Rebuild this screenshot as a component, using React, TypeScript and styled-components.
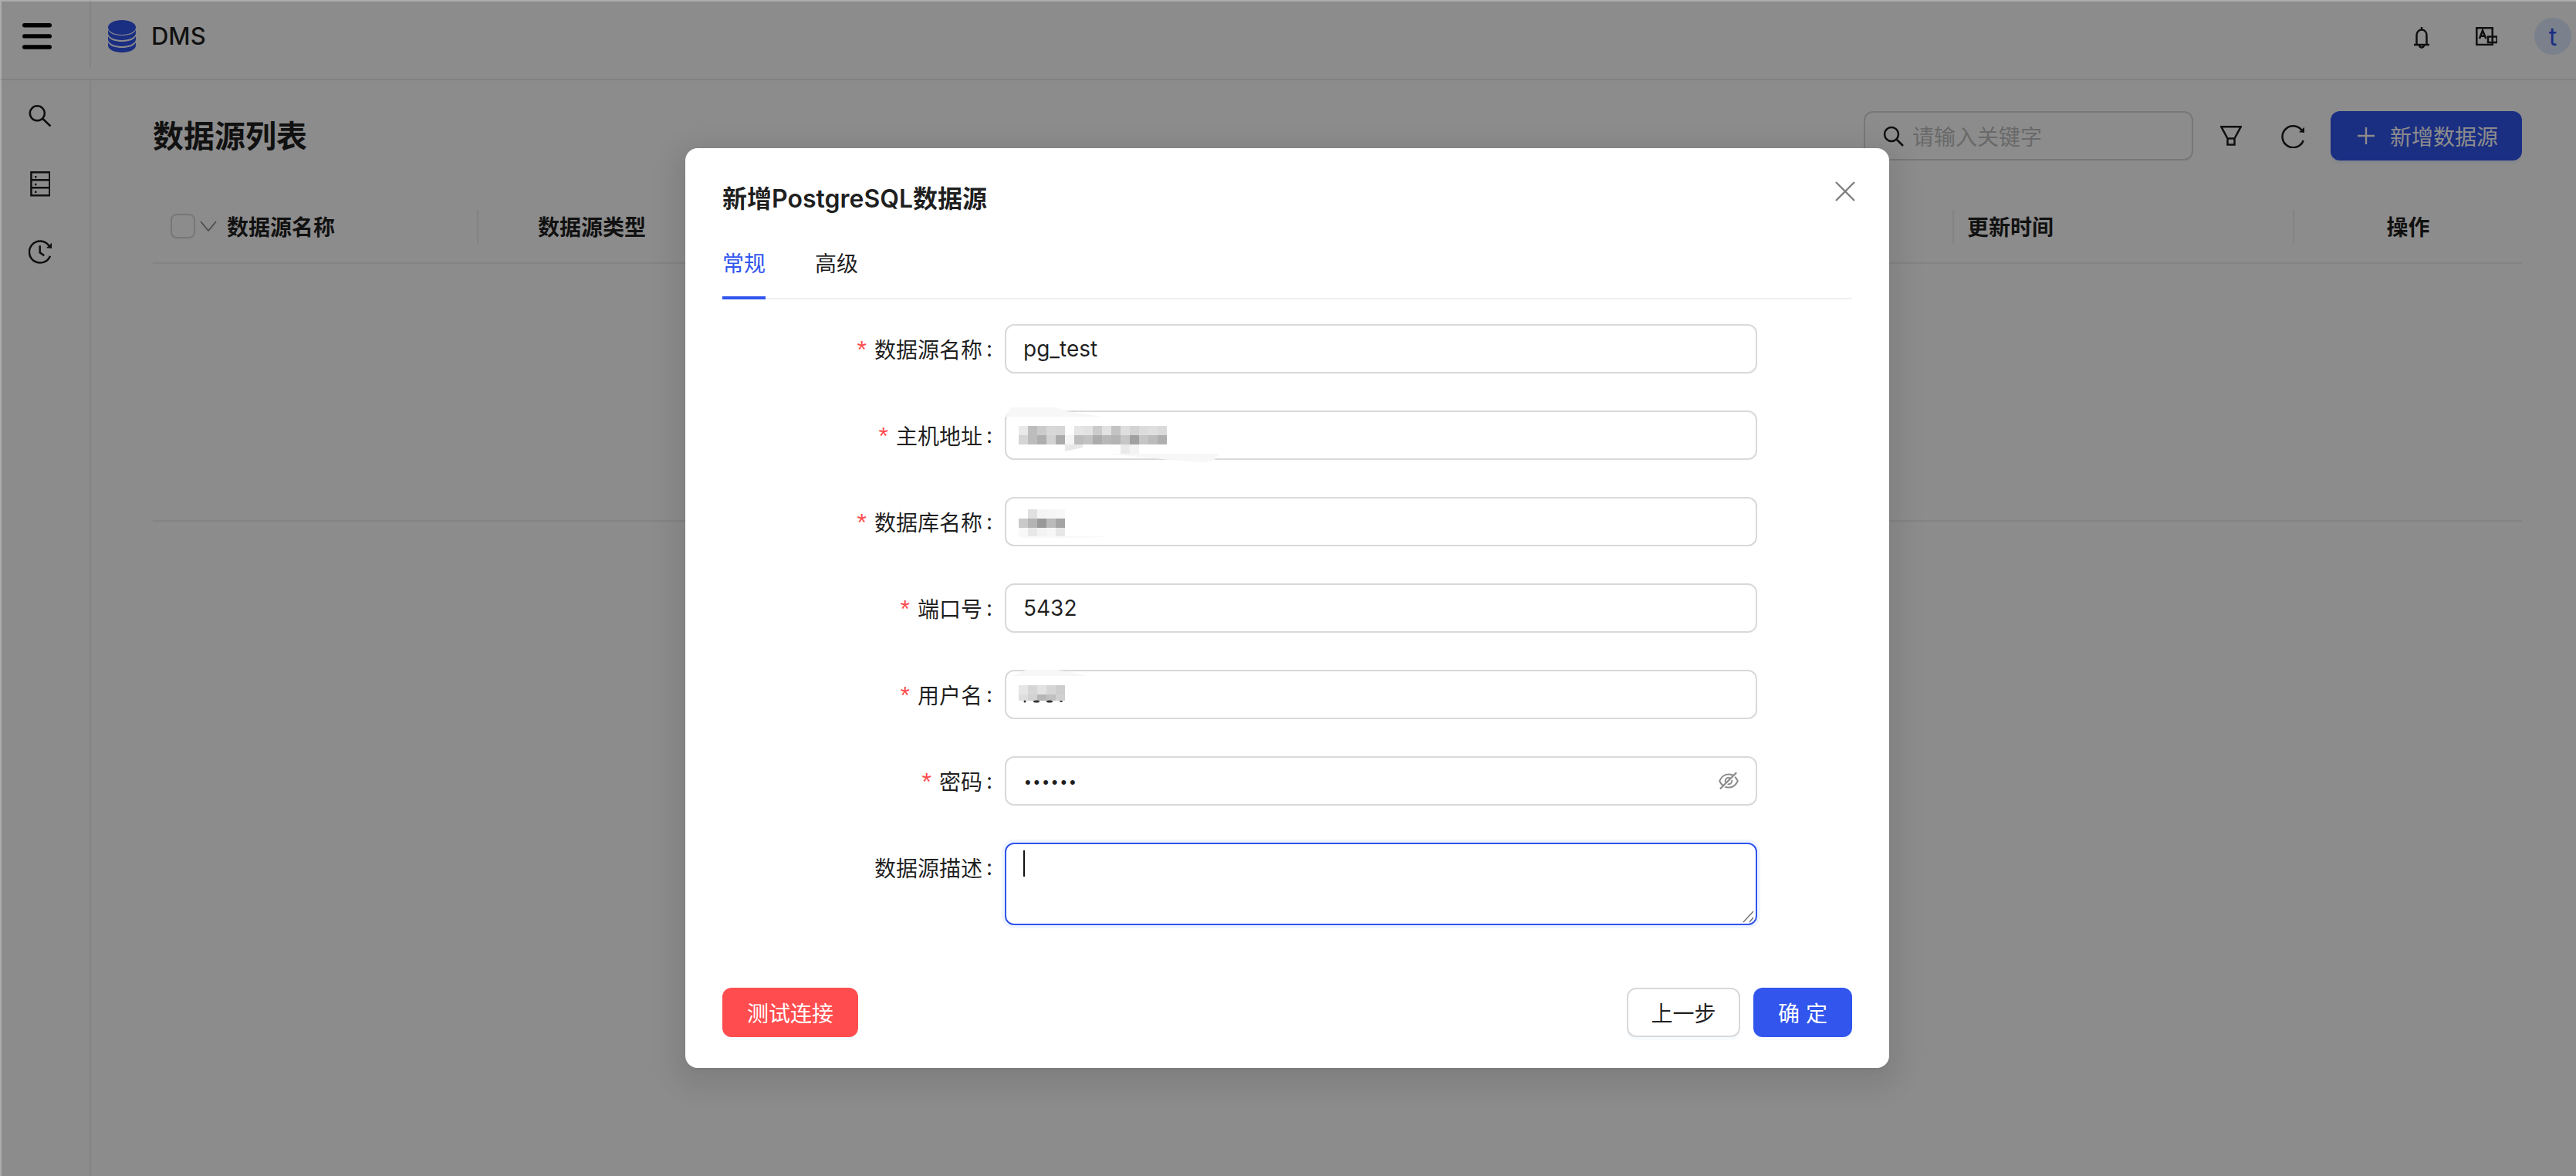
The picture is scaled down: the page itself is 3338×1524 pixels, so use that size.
import React from 'react';
import styled, { createGlobalStyle } from 'styled-components';
import { AiOutlineEyeInvisible } from 'react-icons/ai';

const GlobalStyle = createGlobalStyle`
  html, body { margin: 0; padding: 0; background: #fff; }
  body { font-family: Inter, "Noto Sans CJK SC", sans-serif; color: rgba(0, 0, 0, 0.88); }
  * { box-sizing: border-box; }
`;

const BLUE = '#3155ed';

const Page = styled.div`
  position: relative;
  width: 3338px;
  height: 1524px;
  overflow: hidden;
  background: #fff;
  display: flex;
  flex-direction: column;
`;

const Header = styled.header`
  height: 104px;
  flex: none;
  border-bottom: 2px solid #e9e9e9;
  display: flex;
  align-items: flex-start;
`;

const MenuCell = styled.div`
  width: 118px;
  height: 88px;
  flex: none;
  border-right: 2px solid #efefef;
  padding: 30px 0 0 29px;
`;

const Brand = styled.div`
  display: flex;
  align-items: center;
  gap: 19px;
  padding: 26px 0 0 22px;
  font-size: 31px;
  line-height: 42px;
  font-weight: 500;
`;

const HeaderTools = styled.div`
  margin-left: auto;
  display: flex;
  align-items: center;
  padding: 23px 6px 0 0;
`;

const ToolIcon = styled.span<{ $mr: number; $shift: number }>`
  display: flex;
  margin-right: ${p => p.$mr}px;
  margin-top: ${p => p.$shift}px;
`;

const Avatar = styled.div`
  width: 48px;
  height: 48px;
  border-radius: 50%;
  background: #dfe9ff;
  color: ${BLUE};
  font-size: 32px;
  display: flex;
  align-items: center;
  justify-content: center;
`;

const Body = styled.div`
  flex: 1;
  display: flex;
`;

const Side = styled.aside`
  width: 118px;
  flex: none;
  border-right: 2px solid #efefef;
  padding: 32px 0 0 37px;
  display: flex;
  flex-direction: column;
  align-items: flex-start;
`;

const SideIcon = styled.span<{ $h: number }>`
  height: ${p => p.$h}px;
  display: block;
`;

const Main = styled.main`
  flex: 1;
  padding: 40px 70px 0 80px;
`;

const TitleRow = styled.div`
  display: flex;
  align-items: center;
  height: 64px;
`;

const PageTitle = styled.h1`
  margin: 2px 0 0;
  font-size: 40px;
  line-height: 64px;
  font-weight: 600;
`;

const SearchBox = styled.div`
  margin-left: auto;
  width: 427px;
  height: 64px;
  border: 2px solid #d9d9d9;
  border-radius: 12px;
  display: flex;
  align-items: center;
  padding-left: 23px;
  gap: 11px;
  color: #bfbfbf;
  font-size: 28px;
`;

const IconSlot = styled.span<{ $ml: number }>`
  display: flex;
  margin-left: ${p => p.$ml}px;
`;

const PrimaryBig = styled.div`
  margin-left: 33px;
  width: 248px;
  height: 64px;
  border-radius: 12px;
  background: ${BLUE};
  color: #fff;
  font-size: 28px;
  display: flex;
  align-items: center;
  gap: 20px;
  padding-left: 35px;
  box-shadow: 0 4px 0 rgba(5, 95, 255, 0.06);
`;

const TableHead = styled.div`
  margin-top: 56px;
  height: 78px;
  border-bottom: 2px solid #eeeeee;
  display: grid;
  grid-template-columns: 422px 1912px 441px 295px;
  font-size: 28px;
  font-weight: 600;
`;

const HeadCell = styled.div<{ $pl?: number; $center?: boolean; $last?: boolean }>`
  position: relative;
  display: flex;
  align-items: center;
  padding-left: ${p => p.$pl ?? 0}px;
  padding-bottom: 18px;
  justify-content: ${p => (p.$center ? 'center' : 'flex-start')};
  &::after {
    content: ${p => (p.$last ? 'none' : '""')};
    position: absolute;
    right: 0;
    top: 8px;
    height: 44px;
    width: 2px;
    background: #efefef;
  }
`;

const Checkbox = styled.span`
  width: 32px;
  height: 32px;
  border: 2px solid #d9d9d9;
  border-radius: 8px;
  margin-right: 6px;
  flex: none;
`;

const HeadName = styled.span`
  margin-left: 13px;
`;

const TypeCols = styled.div`
  display: flex;
  padding-left: 77px;
`;

const EmptyBody = styled.div`
  height: 334px;
  border-bottom: 2px solid #eeeeee;
`;

const Overlay = styled.div`
  position: absolute;
  inset: 0;
  background: rgba(0, 0, 0, 0.45);
  box-shadow: inset 2px 2px 0 rgba(255, 255, 255, 0.28);
  display: flex;
  justify-content: center;
  align-items: flex-start;
  padding-top: 192px;
`;

const Dialog = styled.div`
  position: relative;
  width: 1560px;
  height: 1192px;
  margin-right: 2px;
  background: #fff;
  border-radius: 16px;
  padding: 42px 48px 40px;
  box-shadow: 0 12px 32px 16px rgba(0, 0, 0, 0.08), 0 6px 12px -8px rgba(0, 0, 0, 0.12);
  display: flex;
  flex-direction: column;
`;

const CloseButton = styled.span`
  position: absolute;
  top: 43px;
  right: 44px;
  display: flex;
`;

const DialogTitle = styled.h2`
  margin: 0;
  font-size: 32px;
  line-height: 48px;
  font-weight: 600;
`;

const Tabs = styled.div`
  margin-top: 38px;
  height: 68px;
  border-bottom: 2px solid #f0f0f0;
  display: flex;
  gap: 64px;
  font-size: 28px;
  line-height: 44px;
`;

const Tab = styled.div<{ $active?: boolean }>`
  position: relative;
  color: ${p => (p.$active ? BLUE : 'rgba(0, 0, 0, 0.88)')};
  &::after {
    content: ${p => (p.$active ? '""' : 'none')};
    position: absolute;
    left: 0;
    right: 0;
    bottom: -2px;
    height: 4px;
    background: ${BLUE};
  }
`;

const Form = styled.div`
  margin-top: 32px;
  display: flex;
  flex-direction: column;
`;

const FormRow = styled.div<{ $gap: number }>`
  display: flex;
  align-items: flex-start;
  margin-bottom: ${p => p.$gap}px;
`;

const LabelCell = styled.label`
  width: 366px;
  flex: none;
  height: 64px;
  display: flex;
  align-items: center;
  justify-content: flex-end;
  font-size: 28px;
  gap: 12px;
  color: rgba(0, 0, 0, 0.88);
`;

const Star = styled.span`
  color: #ff4d4f;
  font-size: 32px;
  line-height: 32px;
  margin-right: -2px;
  margin-top: 2px;
  font-family: "Liberation Sans", sans-serif;
`;

const Colon = styled.span`
  margin-left: -7px;
  margin-right: 16px;
  width: 8px;
  text-align: right;
`;

const InputBox = styled.div`
  position: relative;
  width: 975px;
  height: 64px;
  border: 2px solid #d9d9d9;
  border-radius: 12px;
  padding: 0 22px;
  display: flex;
  align-items: center;
  font-size: 28px;
  color: rgba(0, 0, 0, 0.88);
`;

const Dots = styled.span`
  font-size: 22px;
  letter-spacing: 3.9px;
  margin: 3px 0 0 2px;
  font-family: "Liberation Sans", sans-serif;
`;

const EyeSlot = styled.span`
  margin-left: auto;
  margin-right: -2px;
  display: flex;
  color: rgba(0, 0, 0, 0.45);
  font-size: 30px;
`;

const TextArea = styled.div`
  position: relative;
  width: 975px;
  height: 107px;
  border: 2px solid ${BLUE};
  border-radius: 12px;
  box-shadow: 0 0 0 4px rgba(5, 95, 255, 0.06);
  padding: 8px 22px;
`;

const Caret = styled.span`
  display: block;
  width: 2px;
  height: 34px;
  background: #111;
`;

const Resize = styled.svg`
  position: absolute;
  right: 1px;
  bottom: 1px;
`;

const Mask = styled.svg<{ $top: number }>`
  position: absolute;
  left: -2px;
  top: ${p => p.$top}px;
  overflow: visible;
  pointer-events: none;
`;

const Footer = styled.div`
  margin-top: auto;
  display: flex;
  align-items: center;
  font-size: 28px;
`;

const Btn = styled.div<{ $bg: string; $fg: string; $w: number; $line?: boolean }>`
  width: ${p => p.$w}px;
  height: 64px;
  border-radius: 12px;
  background: ${p => p.$bg};
  color: ${p => p.$fg};
  border: ${p => (p.$line ? '2px solid #d9d9d9' : 'none')};
  display: flex;
  align-items: center;
  justify-content: center;
  box-shadow: 0 4px 0 rgba(5, 95, 255, 0.03);
`;

const FooterRight = styled.div`
  margin-left: auto;
  display: flex;
  gap: 17px;
`;

type Cell = [number, number, number];

// mosaic patches that hide values in the reference
const hostCells: Cell[] = [
  [0, 0, 0xe9], [1, 0, 0xbd], [2, 0, 0xcb], [3, 0, 0xd8], [4, 0, 0xd6], [6, 0, 0xe5], [7, 0, 0xe2], [8, 0, 0xcb],
  [9, 0, 0xe2], [10, 0, 0xc3], [11, 0, 0xde], [12, 0, 0xd2], [13, 0, 0xdc], [14, 0, 0xdf], [15, 0, 0xda],
  [0, 1, 0xd5], [1, 1, 0xbc], [2, 1, 0xae], [3, 1, 0xd2], [4, 1, 0xaa], [5, 1, 0xf5], [6, 1, 0xbc], [7, 1, 0xc2],
  [8, 1, 0xac], [9, 1, 0xb8], [10, 1, 0xb4], [11, 1, 0xc6], [12, 1, 0xa0], [13, 1, 0xc5], [14, 1, 0xbc], [15, 1, 0xaf],
  [11, 2, 0xea], [12, 2, 0xf3],
];

const dbCells: Cell[] = [
  [1, 0, 0xe0], [2, 0, 0xf4], [3, 0, 0xf6], [4, 0, 0xf7],
  [0, 1, 0xc9], [1, 1, 0xb4], [2, 1, 0x99], [3, 1, 0xbb], [4, 1, 0xa4],
  [0, 2, 0xf8], [1, 2, 0xe8], [2, 2, 0xf3], [3, 2, 0xf7], [4, 2, 0xe7],
];

const userCells: Cell[] = [
  [0, 0, 0xe6], [1, 0, 0xd6], [2, 0, 0xe2], [3, 0, 0xd6], [4, 0, 0xcd],
  [0, 1, 0xde], [1, 1, 0xd2], [2, 1, 0xb6], [3, 1, 0xc0], [4, 1, 0xd0],
];

const Mosaic: React.FC<{ cells: Cell[]; top: number; children?: React.ReactNode }> = ({ cells, top, children }) => (
  <Mask width={975} height={64} $top={top}>
    {cells.map(([c, r, v]) => (
      <rect key={`${c}-${r}`} x={18 + c * 12} y={r * 12} width={12} height={12} fill={`rgb(${v},${v},${v})`} />
    ))}
    {children}
  </Mask>
);

const DbStack = () => (
  <svg width="37" height="42" viewBox="0 0 37 42" fill={BLUE}>
    <ellipse cx="18" cy="9.500" rx="18" ry="9.500" />
    {[13, 21, 29].map(y => (
      <path
        key={y}
        d={`M0 ${y}C3 ${y + 5} 10 ${y + 7} 18 ${y + 7}S33 ${y + 5} 36 ${y}V${y + 4}C36 ${y + 9} 28 ${y + 13} 18 ${y + 13}S0 ${y + 9} 0 ${y + 4}Z`}
      />
    ))}
  </svg>
);

const Burger = () => (
  <svg width="38" height="34" viewBox="0 0 38 34" stroke="#000" strokeWidth="5.400" strokeLinecap="round">
    <path d="M2.700 2.700h32.600M2.700 16.900h32.600M2.700 31h32.600" />
  </svg>
);

const Line: React.FC<{ w: number; h: number; d: string; children?: React.ReactNode }> = ({ w, h, d, children }) => (
  <svg width={w} height={h} viewBox={`0 0 ${w} ${h}`} fill="none" stroke="#1d1d1d" strokeWidth="2.500">
    <path d={d} />
    {children}
  </svg>
);

const SearchGlyph = () => <Line w={30} h={30} d="M11.300 1.300a9.500 9.500 0 1 1 0 19 9.500 9.500 0 0 1 0-19zM18 17.500L28.500 27.500" />;

const ServerGlyph = () => (
  <Line w={28} h={33} d="M3.400 1.300h24v30h-24zM3.400 11.300h24M3.400 21.300h24">
    <path d="M8 6h2.400v2.400H8zM8 15.800h2.400v2.400H8zM8 25.600h2.400V28H8z" fill="#1d1d1d" stroke="none" />
  </Line>
);

const ArcArrow = () => <path d="M30 3.700V11L23 10.200z" fill="#1d1d1d" stroke="none" />;

const HistoryGlyph = () => (
  <Line w={31} h={31} d="M28 20.700A14 14 0 1 1 26.300 7.300M14.700 7.300v9l5.600 4">
    <ArcArrow />
  </Line>
);

const RefreshGlyph = () => (
  <Line w={31} h={31} d="M28.700 21A14 14 0 1 1 26.700 7.700">
    <ArcArrow />
  </Line>
);

const App: React.FC = () => (
  <Page>
    <GlobalStyle />
    <Header>
      <MenuCell>
        <Burger />
      </MenuCell>
      <Brand>
        <DbStack />
        DMS
      </Brand>
      <HeaderTools>
        <ToolIcon $mr={60} $shift={4}>
          <Line w={20} h={28} d="M3.500 22V11.500C3.500 7 6 3.500 10 3.500s6.500 3.500 6.500 8V22M0 23h20M10 0v3.500M7 23.500a3 3 0 0 0 6 0" />
        </ToolIcon>
        <ToolIcon $mr={48} $shift={0}>
          <Line w={28} h={24} d="M21.700 10V1.300H1.300V23H21.700V10M16 12.500h11.700V20H16zM5 15L9 4.500L13.300 15M6.300 11.700h5.500" />
        </ToolIcon>
        <Avatar>t</Avatar>
      </HeaderTools>
    </Header>
    <Body>
      <Side>
        <SideIcon $h={86}>
          <SearchGlyph />
        </SideIcon>
        <SideIcon $h={89}>
          <ServerGlyph />
        </SideIcon>
        <SideIcon $h={32}>
          <HistoryGlyph />
        </SideIcon>
      </Side>
      <Main>
        <TitleRow>
          <PageTitle>数据源列表</PageTitle>
          <SearchBox>
            <Line w={27} h={27} d="M11 2a9 9 0 1 1 0 18 9 9 0 0 1 0-18zM17.500 17.500L26 26" />
            请输入关键字
          </SearchBox>
          <IconSlot $ml={35}>
            <Line w={28} h={26} d="M1.200 1.200H26.800L18.500 16.500H9.500zM9.500 16.500h9v8h-9z" />
          </IconSlot>
          <IconSlot $ml={51}>
            <RefreshGlyph />
          </IconSlot>
          <PrimaryBig>
            <svg width="22" height="22" viewBox="0 0 22 22" stroke="#fff" strokeWidth="2.400">
              <path d="M11 0v22M0 11h22" />
            </svg>
            新增数据源
          </PrimaryBig>
        </TitleRow>
        <TableHead>
          <HeadCell $pl={23}>
            <Checkbox />
            <svg width="22" height="14" viewBox="0 0 22 14" fill="none" stroke="#8c8c8c" strokeWidth="1.800">
              <path d="M1 1l10 12L21 1" />
            </svg>
            <HeadName>数据源名称</HeadName>
          </HeadCell>
          <HeadCell>
            <TypeCols>数据源类型</TypeCols>
          </HeadCell>
          <HeadCell $pl={17}>更新时间</HeadCell>
          <HeadCell $center $last>
            操作
          </HeadCell>
        </TableHead>
        <EmptyBody />
      </Main>
    </Body>
    <Overlay>
      <Dialog>
        <CloseButton>
          <svg width="26" height="26" viewBox="0 0 26 26" stroke="#808080" strokeWidth="2.400">
            <path d="M1 1l24 24M25 1L1 25" />
          </svg>
        </CloseButton>
        <DialogTitle>新增PostgreSQL数据源</DialogTitle>
        <Tabs>
          <Tab $active>常规</Tab>
          <Tab>高级</Tab>
        </Tabs>
        <Form>
          <FormRow $gap={48}>
            <LabelCell>
              <Star>*</Star>
              数据源名称
              <Colon>:</Colon>
            </LabelCell>
            <InputBox>pg_test</InputBox>
          </FormRow>
          <FormRow $gap={48}>
            <LabelCell>
              <Star>*</Star>
              主机地址
              <Colon>:</Colon>
            </LabelCell>
            <InputBox>
              <Mosaic cells={hostCells} top={18}>
                <path d="M8 -24L65 -24L81 -19L125 -12L1 -12Z" fill="#f7f7f7" />
                <path d="M133 36L278 36L271 45L258 47L225 45Z" fill="#f7f7f7" />
                <path d="M78 24H101V28L78 33Z" fill="#e8e8e8" />
              </Mosaic>
            </InputBox>
          </FormRow>
          <FormRow $gap={48}>
            <LabelCell>
              <Star>*</Star>
              数据库名称
              <Colon>:</Colon>
            </LabelCell>
            <InputBox>
              <Mosaic cells={dbCells} top={14}>
                <path d="M18 35H140L100 37H26Z" fill="#f9f9f9" />
              </Mosaic>
            </InputBox>
          </FormRow>
          <FormRow $gap={48}>
            <LabelCell>
              <Star>*</Star>
              端口号
              <Colon>:</Colon>
            </LabelCell>
            <InputBox>5432</InputBox>
          </FormRow>
          <FormRow $gap={48}>
            <LabelCell>
              <Star>*</Star>
              用户名
              <Colon>:</Colon>
            </LabelCell>
            <InputBox>
              <Mosaic cells={userCells} top={18}>
                <path d="M10 -12L28 -20L68 -20L108 -12Z" fill="#f7f7f7" />
                <rect x="18" y="20" width="60" height="4" fill="#fff" />
                <g fill="#333">
                  <ellipse cx="26" cy="21" rx="1.500" ry="1.500" />
                  <ellipse cx="41" cy="21" rx="4" ry="1.500" />
                  <ellipse cx="58" cy="21" rx="4" ry="1.500" />
                  <ellipse cx="73" cy="21" rx="2" ry="1" />
                </g>
              </Mosaic>
            </InputBox>
          </FormRow>
          <FormRow $gap={48}>
            <LabelCell>
              <Star>*</Star>
              密码
              <Colon>:</Colon>
            </LabelCell>
            <InputBox>
              <Dots>••••••</Dots>
              <EyeSlot>
                <AiOutlineEyeInvisible />
              </EyeSlot>
            </InputBox>
          </FormRow>
          <FormRow $gap={0}>
            <LabelCell>
              数据源描述
              <Colon>:</Colon>
            </LabelCell>
            <TextArea>
              <Caret />
              <Resize width="16" height="16" viewBox="0 0 16 16" fill="none" stroke="#666" strokeWidth="1.200">
                <path d="M1 15L14 1M9 15l5-6" />
              </Resize>
            </TextArea>
          </FormRow>
        </Form>
        <Footer>
          <Btn $bg="#ff4d4f" $fg="#fff" $w={176}>
            测试连接
          </Btn>
          <FooterRight>
            <Btn $bg="#fff" $fg="rgba(0,0,0,0.88)" $w={147} $line>
              上一步
            </Btn>
            <Btn $bg={BLUE} $fg="#fff" $w={128}>
              确 定
            </Btn>
          </FooterRight>
        </Footer>
      </Dialog>
    </Overlay>
  </Page>
);

export default App;
